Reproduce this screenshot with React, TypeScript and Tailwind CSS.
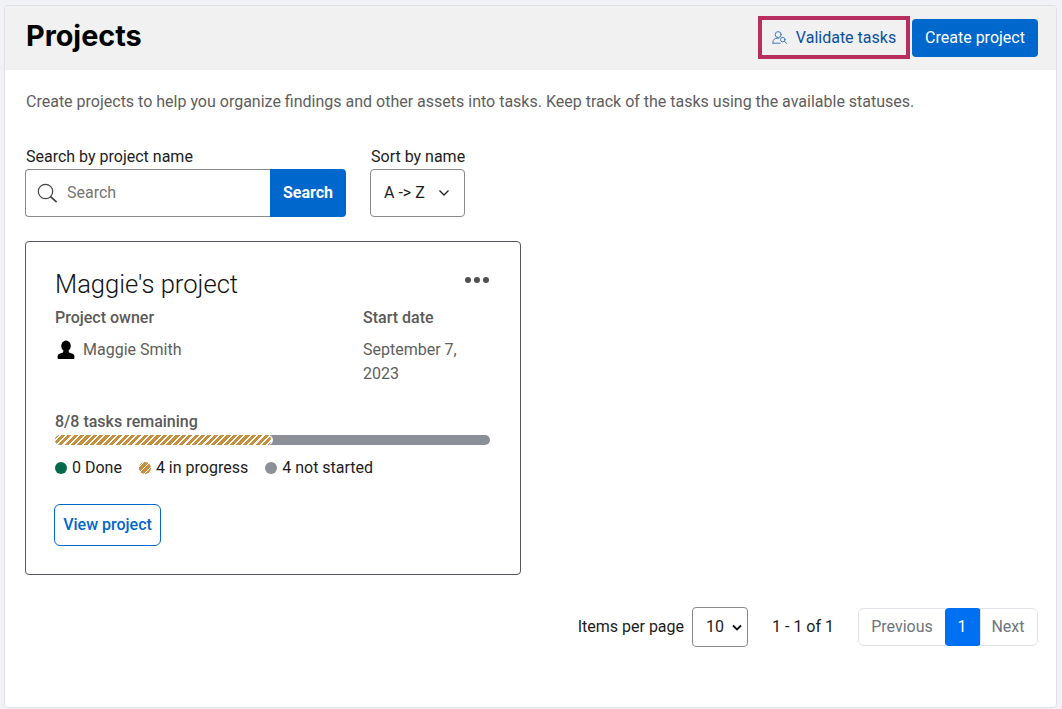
import React from "react";

const roboto = { fontFamily: "Roboto, sans-serif" };

function ValidateIcon() {
  return (
    <svg width="16" height="16" viewBox="0 0 16 16" fill="none" stroke="#2f6db5" strokeWidth="0.9" strokeLinecap="round">
      <circle cx="6.200" cy="4.600" r="3" />
      <path d="M1 13.200v-1.400c0-2 1.800-3.600 4-3.600h1.600" />
      <path d="M1 13.200h7" />
      <circle cx="10.800" cy="9.600" r="2.300" />
      <path d="M12.500 11.300l2.300 2.200" />
    </svg>
  );
}

function PersonIcon() {
  return (
    <svg width="20" height="20" viewBox="0 0 20 20" fill="#000">
      <ellipse cx="10" cy="6" rx="4.800" ry="5.400" />
      <path d="M7.600 10h4.800l.6 2.400 3.400 1.300c1.300.5 2 1.500 2 2.800v1.500c0 .6-.4 1-1 1H2.600c-.6 0-1-.4-1-1v-1.500c0-1.300.7-2.300 2-2.800l3.400-1.300z" />
    </svg>
  );
}

function SearchIcon() {
  return (
    <svg width="20" height="20" viewBox="0 0 20 20" fill="none" stroke="#444" strokeWidth="1.200" strokeLinecap="round">
      <circle cx="8.500" cy="8.500" r="7.200" />
      <path d="M13.800 13.800l5.300 4.800" strokeWidth="1.800" />
    </svg>
  );
}

const barStripes = "repeating-linear-gradient(135deg, #c68f3f 0 3px, #ffffff 3px 4.500px)";
const dotStripes = "repeating-linear-gradient(135deg, #c68f3f 0 3px, #ffffff 3px 4.200px)";

export default function App() {
  return (
    <div className="min-h-[709px] bg-[#f0f2f6] pl-[4px] pr-[4px] pt-[5px] pb-0" style={roboto}>
      <div className="h-[703px] w-[1053px] overflow-hidden rounded-[4px] border border-[#e0e1e4] bg-white">
        <header className="flex h-[64px] items-center justify-between bg-[#f1f1f1] pl-[21px] pr-[18px]">
          <h1 className="mb-[4px] text-[28.800px] font-bold leading-[34px] text-black" style={{ fontFamily: "Inter, sans-serif" }}>
            Projects
          </h1>
          <div className="flex items-center">
            <button className="mb-[1px] mr-[2px] flex h-[43px] w-[152px] items-center justify-center gap-[8px] border-[4px] border-[#b82f5f] text-[16px] text-[#0b4f9e]">
              <ValidateIcon />
              Validate tasks
            </button>
            <button className="h-[38px] w-[126px] rounded-[4px] bg-[#0067cc] text-[16px] text-white">
              Create project
            </button>
          </div>
        </header>

        <main className="pl-[20px] pr-[18px]">
          <p className="mt-[21px] pl-[1px] text-[16px] leading-[22px] text-[#5e5e5e]">
            Create projects to help you organize findings and other assets into tasks. Keep track of the tasks using the available statuses.
          </p>

          <div className="mt-[33px] flex gap-[24px]">
            <div>
              <label className="block pl-[1px] text-[16px] leading-[22px] text-[#1c1c1c]">Search by project name</label>
              <div className="mt-[1px] flex h-[48px] w-[321px]">
                <div className="flex flex-1 items-center gap-[10px] rounded-l-[4px] border border-r-0 border-[#8a8a8a] pl-[11px]">
                  <SearchIcon />
                  <span className="text-[16px] text-[#757575]">Search</span>
                </div>
                <button className="w-[76px] rounded-r-[4px] bg-[#0067cc] text-[16px] font-bold text-white">Search</button>
              </div>
            </div>
            <div>
              <label className="block pl-[1px] text-[16px] leading-[22px] text-[#1c1c1c]">Sort by name</label>
              <div className="mt-[1px] flex h-[48px] w-[95px] items-center justify-between rounded-[4px] border border-[#8a8a8a] pl-[13px] pr-[14px]">
                <span className="text-[16px] text-[#1c1c1c]">A -&gt; Z</span>
                <svg width="12" height="8" viewBox="0 0 12 8" fill="none" stroke="#222" strokeWidth="1.400">
                  <path d="M1.500 1.500L6 6l4.500-4.500" />
                </svg>
              </div>
            </div>
          </div>

          <section className="mt-[24px] h-[334px] w-[496px] rounded-[4px] border border-[#55585c] pl-[29px] pr-[30px] pt-[26px]">
            <div className="flex items-start justify-between">
              <h2 className="text-[25.600px] font-light leading-[32px] text-[#111]">Maggie's project</h2>
              <div className="mr-[1px] mt-[9px] flex gap-[3px]">
                <span className="h-[6px] w-[6px] rounded-full bg-[#4f4f4f]" />
                <span className="h-[6px] w-[6px] rounded-full bg-[#4f4f4f]" />
                <span className="h-[6px] w-[6px] rounded-full bg-[#4f4f4f]" />
              </div>
            </div>

            <div className="mt-[7px] flex">
              <div className="w-[308px]">
                <div className="text-[16px] font-medium leading-[22px] text-[#5a5a5a]">Project owner</div>
                <div className="mt-[9px] flex items-center gap-[7px] pl-[1px]">
                  <PersonIcon />
                  <span className="text-[16px] leading-[24px] text-[#5e5e5e]">Maggie Smith</span>
                </div>
              </div>
              <div className="w-[110px]">
                <div className="text-[16px] font-medium leading-[22px] text-[#5a5a5a]">Start date</div>
                <div className="mt-[9px] text-[16px] leading-[24px] text-[#5e5e5e]">
                  September 7,
                  <br />
                  2023
                </div>
              </div>
            </div>

            <div className="mt-[25px] text-[16px] font-medium leading-[22px] text-[#5a5a5a]">8/8 tasks remaining</div>
            <div className="mt-[2px] flex h-[10px] w-[435px] overflow-hidden rounded-full bg-[#8b9097]">
              <div className="h-full w-[218px] rounded-full border-r-2 border-white" style={{ backgroundImage: barStripes }} />
            </div>

            <div className="mt-[12px] flex items-center text-[16px] leading-[22px] text-[#1c1c1c]">
              <span className="h-[12px] w-[12px] rounded-full bg-[#04694a]" />
              <span className="ml-[5px]">0 Done</span>
              <span className="ml-[17px] h-[12px] w-[12px] rounded-full" style={{ backgroundImage: dotStripes }} />
              <span className="ml-[5px]">4 in progress</span>
              <span className="ml-[17px] h-[12px] w-[12px] rounded-full bg-[#8b9097]" />
              <span className="ml-[5px]">4 not started</span>
            </div>

            <button className="-ml-[1px] mt-[25px] h-[42px] w-[107px] rounded-[6px] border border-[#0067cc] text-[16px] font-medium text-[#0067cc]">
              View project
            </button>
          </section>

          <nav className="mt-[32px] flex items-center justify-end text-[16px] text-[#1c1c1c]">
            <span>Items per page</span>
            <div className="ml-[8px] flex h-[40px] w-[56px] items-center justify-between rounded-[4px] border border-[#8a8a8a] pl-[13px] pr-[5px]">
              <span>10</span>
              <svg width="10" height="7" viewBox="0 0 10 7" fill="none" stroke="#111" strokeWidth="1.800">
                <path d="M1 1.500l4 4 4-4" />
              </svg>
            </div>
            <span className="ml-[24px]">1 - 1 of 1</span>
            <div className="ml-[24px] flex h-[38px]">
              <span className="flex w-[88px] items-center justify-center rounded-l-[6px] border border-[#dfe2e6] text-[#6c757d]">Previous</span>
              <span className="-ml-px flex w-[36px] items-center justify-center rounded-[4px] bg-[#0070f3] pr-[2px] text-white">1</span>
              <span className="-ml-px flex w-[58px] items-center justify-center rounded-r-[6px] border border-[#dfe2e6] pr-[2px] text-[#6c757d]">Next</span>
            </div>
          </nav>
        </main>
      </div>
    </div>
  );
}
